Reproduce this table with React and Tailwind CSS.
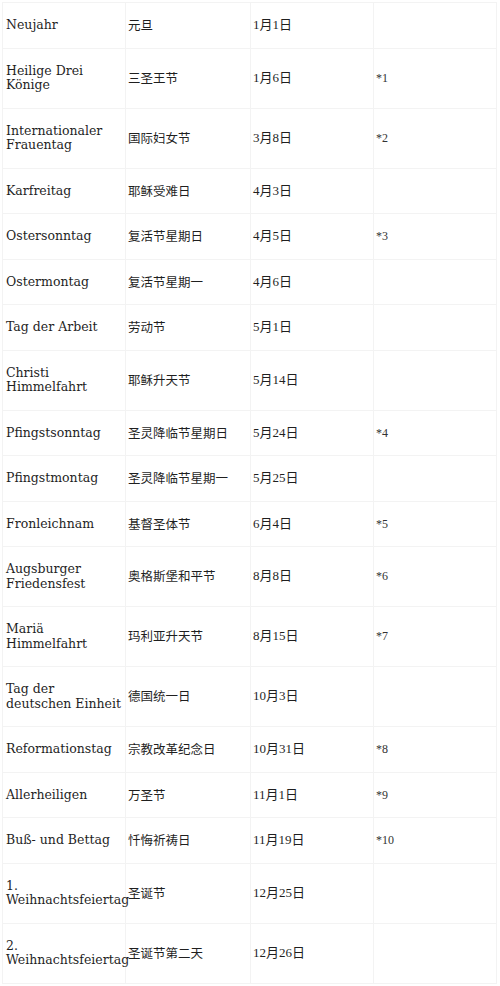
const rows = [
  [['Neujahr'], '元旦', '1月1日', ''],
  [['Heilige Drei', 'Könige'], '三圣王节', '1月6日', '*1'],
  [['Internationaler', 'Frauentag'], '国际妇女节', '3月8日', '*2'],
  [['Karfreitag'], '耶稣受难日', '4月3日', ''],
  [['Ostersonntag'], '复活节星期日', '4月5日', '*3'],
  [['Ostermontag'], '复活节星期一', '4月6日', ''],
  [['Tag der Arbeit'], '劳动节', '5月1日', ''],
  [['Christi', 'Himmelfahrt'], '耶稣升天节', '5月14日', ''],
  [['Pfingstsonntag'], '圣灵降临节星期日', '5月24日', '*4'],
  [['Pfingstmontag'], '圣灵降临节星期一', '5月25日', ''],
  [['Fronleichnam'], '基督圣体节', '6月4日', '*5'],
  [['Augsburger', 'Friedensfest'], '奥格斯堡和平节', '8月8日', '*6'],
  [['Mariä', 'Himmelfahrt'], '玛利亚升天节', '8月15日', '*7'],
  [['Tag der', 'deutschen Einheit'], '德国统一日', '10月3日', ''],
  [['Reformationstag'], '宗教改革纪念日', '10月31日', '*8'],
  [['Allerheiligen'], '万圣节', '11月1日', '*9'],
  [['Buß- und Bettag'], '忏悔祈祷日', '11月19日', '*10'],
  [['1.', 'Weihnachtsfeiertag'], '圣诞节', '12月25日', ''],
  [['2.', 'Weihnachtsfeiertag'], '圣诞节第二天', '12月26日', ''],
]

const cell = 'border border-[#f3f3f3] align-middle py-[15px] leading-[14.5px]'

export default function App() {
  return (
    <div className="w-[500px] bg-white p-[2px] text-[#1f1f1f]">
      <table className="table-fixed border-collapse w-[494px]">
        <colgroup>
          <col className="w-[123px]" />
          <col className="w-[125px]" />
          <col className="w-[123px]" />
          <col className="w-[123px]" />
        </colgroup>
        <tbody>
          {rows.map(([de, zh, date, note], i) => (
            <tr key={i}>
              <td className={`${cell} pl-[3px] pr-0 whitespace-nowrap text-[12.5px] font-['DejaVu_Serif',serif]`}>
                {de.map((line, j) => (
                  <div key={j}>{line}</div>
                ))}
              </td>
              <td className={`${cell} pl-[2px] text-[12.5px] font-['Noto_Sans_CJK_SC',sans-serif]`}>{zh}</td>
              <td className={`${cell} pl-[2px] text-[13px] font-['Liberation_Serif','Noto_Sans_CJK_SC',serif]`}>{date}</td>
              <td className={`${cell} pl-[2px] text-[12px] text-[#333] font-['Liberation_Serif',serif]`}>{note}</td>
            </tr>
          ))}
        </tbody>
      </table>
    </div>
  )
}
